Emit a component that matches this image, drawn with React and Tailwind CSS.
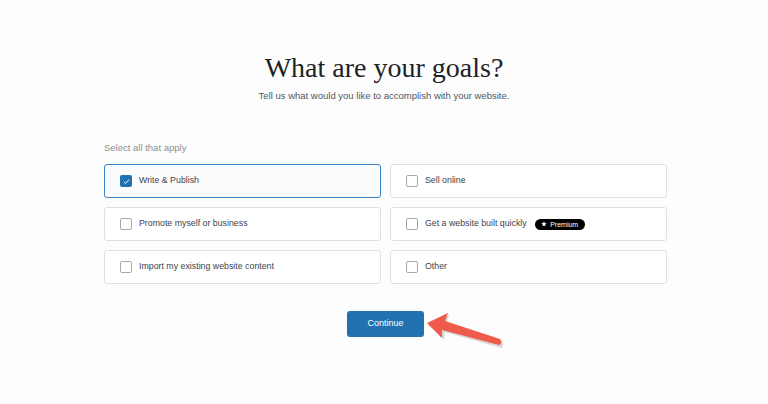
import { useState } from "react";

const goals = [
  { id: "write", label: "Write & Publish" },
  { id: "sell", label: "Sell online" },
  { id: "promote", label: "Promote myself or business" },
  { id: "built", label: "Get a website built quickly", premium: true },
  { id: "import", label: "Import my existing website content" },
  { id: "other", label: "Other" },
];

function Check({ checked }) {
  if (checked) {
    return (
      <span className="flex h-[12px] w-[12px] shrink-0 items-center justify-center rounded-[2px] bg-[#2271b1]">
        <svg viewBox="0 0 12 12" className="h-[9px] w-[9px]" fill="none" stroke="white" strokeWidth="1.3">
          <path d="M2.5 6.3l2.3 2.2 4.7-5" />
        </svg>
      </span>
    );
  }
  return <span className="h-[12px] w-[12px] shrink-0 rounded-[2px] border border-[#a7aaad] bg-white" />;
}

export default function App() {
  const [selected, setSelected] = useState(["write"]);

  const toggle = (id) =>
    setSelected((s) => (s.includes(id) ? s.filter((x) => x !== id) : [...s, id]));

  return (
    <div
      className="relative flex h-[404px] w-[768px] flex-col items-center bg-[#fdfdfd] pt-[51px] text-[#2c3338]"
      style={{ fontFamily: "'Liberation Sans', Arial, sans-serif" }}
    >
      <h1
        className="text-[28px] leading-[34px] text-[#1d2327]"
        style={{ fontFamily: "'Liberation Serif', serif" }}
      >
        What are your goals?
      </h1>
      <p className="mt-[4px] text-[9.5px] leading-[14px] text-[#50575e]">
        Tell us what would you like to accomplish with your website.
      </p>

      <div className="ml-[3px] mt-[38px] w-[563px]">
        <div className="text-[9.5px] leading-[14px] text-[#8c8f94]">Select all that apply</div>
        <div className="mt-[9px] grid grid-cols-2 gap-x-[9px] gap-y-[9px]">
          {goals.map((g) => {
            const on = selected.includes(g.id);
            return (
              <button
                key={g.id}
                onClick={() => toggle(g.id)}
                className={
                  "flex h-[34px] items-center gap-[7px] rounded-[3px] pl-[15px] text-left text-[8.8px] text-[#3c434a] " +
                  (on
                    ? "border-[1.5px] border-[#3582c4] bg-[#fbfcfe]"
                    : "border border-[#e0e0e0] bg-white")
                }
              >
                <Check checked={on} />
                <span className="whitespace-nowrap">{g.label}</span>
                {g.premium && (
                  <span className="ml-[1px] flex h-[11px] w-[50px] items-center justify-center gap-[3px] whitespace-nowrap rounded-full bg-black text-[7px] leading-none text-white">
                    <svg viewBox="0 0 10 10" className="h-[6px] w-[6px]" fill="white">
                      <path d="M5 0.5l1.3 2.9 3.1.3-2.4 2.1.7 3.1L5 7.3 2.3 8.9 3 5.8 0.6 3.7l3.1-.3z" />
                    </svg>
                    Premium
                  </span>
                )}
              </button>
            );
          })}
        </div>
      </div>

      <button className="ml-[3px] mt-[27px] h-[26px] w-[77px] rounded-[3px] bg-[#2271b1] text-[9px] text-white">
        Continue
      </button>

      {/* annotation arrow */}
      <svg className="pointer-events-none absolute left-[420px] top-[308px]" width="100" height="50" viewBox="0 0 100 50">
        <g fill="#000" opacity="0.15" transform="translate(1.5 2)">
          <path d="M7 15 L28 5 L25 13 L80 31 Q83 34 80 38 L23 22 L23 30 Z" />
        </g>
        <path d="M7 15 L28 5 L25 13 L80 31 Q83 35 79 37 L22 22 L22 30 Z" fill="#f05a4a" />
      </svg>
    </div>
  );
}
